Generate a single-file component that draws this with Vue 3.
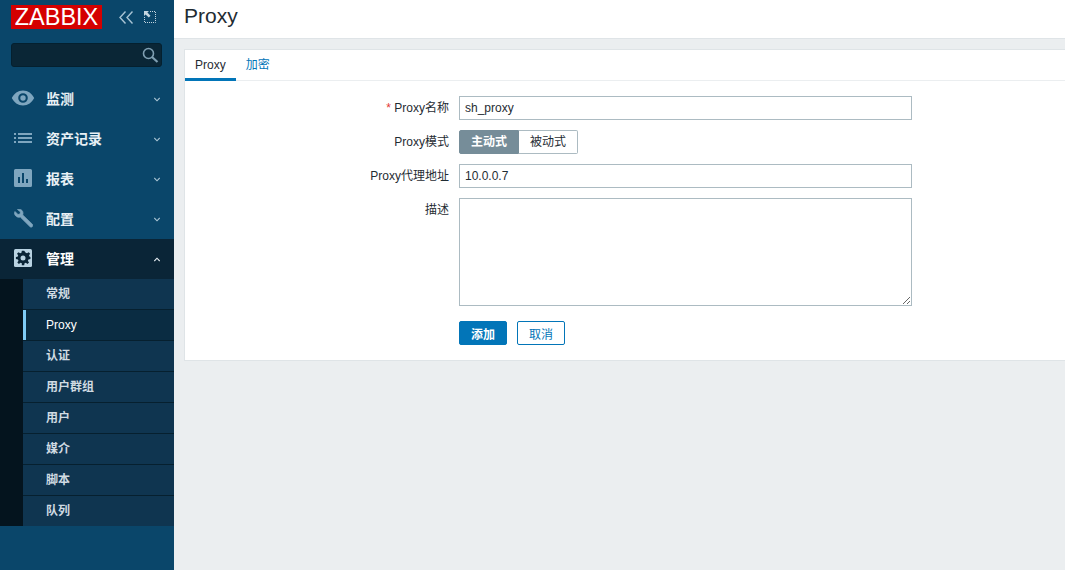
<script setup>
const menu = [
  { label: '监测', icon: 'eye' },
  { label: '资产记录', icon: 'list' },
  { label: '报表', icon: 'chart' },
  { label: '配置', icon: 'wrench' },
  { label: '管理', icon: 'gear', open: true },
]
const subs = ['常规', 'Proxy', '认证', '用户群组', '用户', '媒介', '脚本', '队列']
</script>

<template>
  <div class="page">
    <aside class="side">
      <div class="brand">
        <div class="logo">ZABBIX</div>
        <svg class="ctl" width="14" height="13" viewBox="0 0 14 13" fill="none" stroke="#a9c4d4" stroke-width="1.4">
          <path d="M6.500 .5 1 6.500 6.500 12.500M13.500 .5 8 6.500 13.500 12.500" />
        </svg>
        <svg class="ctl2" width="12" height="12" viewBox="0 0 12 12" fill="none">
          <path d="M.5 6V11.500H11.500V.5H6" stroke="#c5d6e0" stroke-dasharray="1 1" />
          <path d="M0 0h5L3.400 1.600 6.500 4.800 4.800 6.500 1.600 3.400 0 5z" fill="#c5d6e0" />
        </svg>
      </div>
      <div class="search">
        <svg width="18" height="18" viewBox="0 0 18 18" fill="none" stroke="#7f9fb2">
          <circle cx="7.500" cy="7.500" r="5" stroke-width="1.600" />
          <path d="m11 11 5.500 5" stroke-width="2.200" />
        </svg>
      </div>
      <nav class="nav">
        <template v-for="m in menu" :key="m.label">
          <div class="item" :class="{ open: m.open }">
            <span class="ico">
              <svg v-if="m.icon === 'eye'" width="24" height="16" viewBox="0 0 24 16">
                <path fill-rule="evenodd" fill="#7fa6bf" d="M12 .5C7 .5 3 3.500 .8 8c2.200 4.500 6.200 7.500 11.200 7.500s9-3 11.200-7.500C21 3.500 17 .5 12 .5zm0 2.700a4.800 4.800 0 1 1 0 9.600 4.800 4.800 0 0 1 0-9.600zm0 2.100a2.700 2.700 0 1 0 0 5.400 2.700 2.700 0 0 0 0-5.400z" />
              </svg>
              <svg v-else-if="m.icon === 'list'" width="18" height="10" viewBox="0 0 18 10" fill="#7fa6bf">
                <path d="M0 0h2v2H0zM4 0h14v2H4zM0 4h2v2H0zM4 4h14v2H4zM0 8h2v2H0zM4 8h14v2H4z" />
              </svg>
              <svg v-else-if="m.icon === 'chart'" width="18" height="18" viewBox="0 0 18 18">
                <path fill-rule="evenodd" fill="#7fa6bf" d="M1.500 0h15A1.500 1.500 0 0 1 18 1.500v15a1.500 1.500 0 0 1-1.500 1.500h-15A1.500 1.500 0 0 1 0 16.500v-15A1.500 1.500 0 0 1 1.500 0zM4 8v6h2V8zm4-4v10h2V4zm4 6v4h2v-4z" />
              </svg>
              <svg v-else-if="m.icon === 'wrench'" width="19" height="19" viewBox="0 0 19 19">
                <path fill="#7fa6bf" stroke="#7fa6bf" stroke-width=".7" stroke-linejoin="round" d="M1 2.500 4 5.500 6 5 6.500 3 3.500 0.500C6-.5 9 1 9 4.200c0 .7-.1 1.200-.3 1.700l9.600 9.300c.7.800.7 1.700 0 2.400s-1.700.7-2.400 0L6.300 8.100C3.500 9 .5 6.800.5 4c0-.5.200-1 .5-1.500z" />
              </svg>
              <svg v-else width="18" height="18" viewBox="0 0 18 18">
                <rect width="18" height="18" rx="1.500" fill="#b9d3e2" />
                <path transform="translate(9 9) scale(1.180) translate(-9 -9.150)" fill="#0a2537" d="M8 3l-.3 1.700-1.100.5L5.200 4.200 3.900 5.500l1 1.400-.5 1.100L3 8.300v1.800l1.700.3.500 1.100-1 1.400 1.300 1.300 1.400-1 1.100.5L8 15.300h2l.3-1.600 1.100-.5 1.400 1 1.300-1.300-1-1.400.5-1.100 1.700-.3V8.300L14.600 8l-.5-1.100 1-1.400-1.300-1.300-1.400 1-1.100-.5L10 3z" />
                <circle cx="9" cy="9" r="2.500" fill="#b9d3e2" />
              </svg>
            </span>
            <span class="lbl">{{ m.label }}</span>
            <svg class="chev" width="6" height="5" viewBox="0 0 6 5" fill="none" stroke-width="1.100">
              <path :d="m.open ? 'M.3 4 3 1.200 5.700 4' : 'M.3 1 3 3.800 5.700 1'" />
            </svg>
          </div>
        </template>
        <div class="subwrap">
          <ul class="subs">
            <li v-for="s in subs" :key="s" :class="{ cur: s === 'Proxy' }">{{ s }}</li>
          </ul>
        </div>
      </nav>
    </aside>

    <main class="main">
      <header class="head"><h1>Proxy</h1></header>
      <section class="card">
        <div class="tabs">
          <span class="tab on">Proxy</span>
          <span class="tab">加密</span>
        </div>
        <form class="form" @submit.prevent>
          <label class="lab"><i>*</i> Proxy名称</label>
          <input class="inp" value="sh_proxy" />
          <label class="lab">Proxy模式</label>
          <div class="seg"><span class="s on">主动式</span><span class="s">被动式</span></div>
          <label class="lab">Proxy代理地址</label>
          <input class="inp" value="10.0.0.7" />
          <label class="lab top">描述</label>
          <textarea class="inp area"></textarea>
          <span></span>
          <div class="btns">
            <button class="btn pri" type="button">添加</button>
            <button class="btn alt" type="button">取消</button>
          </div>
        </form>
      </section>
    </main>
  </div>
</template>

<style>
html, body { margin: 0; background: #ebeef0; }
</style>

<style scoped>
.page {
  display: flex;
  width: 1065px;
  height: 570px;
  overflow: hidden;
  background: #ebeef0;
  font-family: "Liberation Sans", "Noto Sans CJK SC", sans-serif;
  font-size: 12px;
  color: #1f2c33;
}
.side {
  width: 174px;
  flex: none;
  background: #0a466a;
  color: #f2f2f2;
}
.brand {
  height: 43px;
  display: flex;
  align-items: flex-start;
  padding: 5px 0 0 11px;
  box-sizing: border-box;
}
.logo {
  width: 91px;
  height: 24px;
  background: #d40000;
  color: #fff;
  font-size: 23.500px;
  line-height: 25px;
  text-align: center;
}
.ctl { margin: 6px 0 0 17px; }
.ctl2 { margin: 6px 0 0 11px; }
.search {
  width: 151px;
  height: 24px;
  margin-left: 11px;
  box-sizing: border-box;
  border: 1px solid #04202f;
  border-radius: 3px;
  background: #0a2636;
  display: flex;
  justify-content: flex-end;
  align-items: center;
  padding-right: 2px;
}
.nav { margin-top: 12px; }
.item {
  height: 40px;
  display: flex;
  align-items: center;
  font-size: 14px;
  font-weight: 700;
  color: #e8f0f5;
}
.item.open { background: #0a2537; color: #fff; }
.ico {
  width: 46px;
  flex: none;
  display: flex;
  justify-content: center;
  padding-bottom: 2px;
}
.lbl { flex: 1; padding-bottom: 2px; }
.chev { stroke: #a9c4d4; margin-right: 14px; }
.item.open .chev { stroke: #e8f0f5; }
.subwrap { background: #04141e; padding-left: 23px; }
.subs { list-style: none; margin: 0; padding: 0; }
.subs li {
  height: 31px;
  box-sizing: border-box;
  background: #0f3550;
  border-bottom: 1px solid #06202f;
  padding-left: 23px;
  line-height: 30px;
  font-weight: 700;
  color: #d0dbe2;
  position: relative;
}
.subs li:last-child { height: 30px; border-bottom: 0; }
.subs li.cur { background: #0a2c42; color: #fff; font-weight: 400; }
.subs li.cur::before {
  content: "";
  position: absolute;
  left: 0;
  top: 0;
  bottom: 0;
  width: 3px;
  background: #7fcbf5;
}
.main { flex: 1; min-width: 0; }
.head {
  height: 39px;
  box-sizing: border-box;
  background: #fff;
  border-bottom: 1px solid #dfe4e7;
  padding-left: 10px;
}
h1 {
  margin: 0;
  font-size: 21px;
  font-weight: 400;
  line-height: 31px;
}
.card {
  margin: 10px 0 0 10px;
  height: 312px;
  box-sizing: border-box;
  background: #fff;
  border: 1px solid #dfe4e7;
  border-right: 0;
}
.tabs {
  height: 31px;
  box-sizing: border-box;
  display: flex;
  border-bottom: 1px solid #ebeef0;
}
.tab {
  padding: 0 10px;
  line-height: 30px;
  color: #0275b8;
  height: 31px;
  box-sizing: border-box;
}
.tab.on {
  color: #1f2c33;
  border-bottom: 3px solid #0275b8;
}
.form {
  display: grid;
  grid-template-columns: 264px 453px;
  column-gap: 10px;
  row-gap: 10px;
  padding-top: 15px;
}
.lab {
  text-align: right;
  line-height: 24px;
  color: #1f2c33;
}
.lab i { color: #e33734; font-style: normal; }
.inp {
  display: block;
  width: 453px;
  height: 24px;
  box-sizing: border-box;
  border: 1px solid #acbbc2;
  border-radius: 0;
  padding: 0 5px;
  margin: 0;
  outline: 0;
  font: inherit;
  color: #1f2c33;
  background: #fff;
}
.area { height: 108px; resize: both; }
.seg { display: flex; height: 24px; }
.s {
  width: 59px;
  box-sizing: border-box;
  border: 1px solid #acbbc2;
  border-left: 0;
  border-radius: 0 2px 2px 0;
  text-align: center;
  line-height: 22px;
  color: #1f2c33;
}
.s.on {
  width: 60px;
  background: #768d99;
  border: 1px solid #768d99;
  border-radius: 2px 0 0 2px;
  color: #fff;
  font-weight: 700;
}
.btns { display: flex; gap: 10px; margin-top: 5px; }
.btn {
  width: 48px;
  height: 24px;
  box-sizing: border-box;
  padding: 0;
  border-radius: 2px;
  border: 1px solid #0275b8;
  font: inherit;
}
.pri { background: #0275b8; color: #fff; font-weight: 700; }
.alt { background: #fff; color: #0275b8; }
</style>
